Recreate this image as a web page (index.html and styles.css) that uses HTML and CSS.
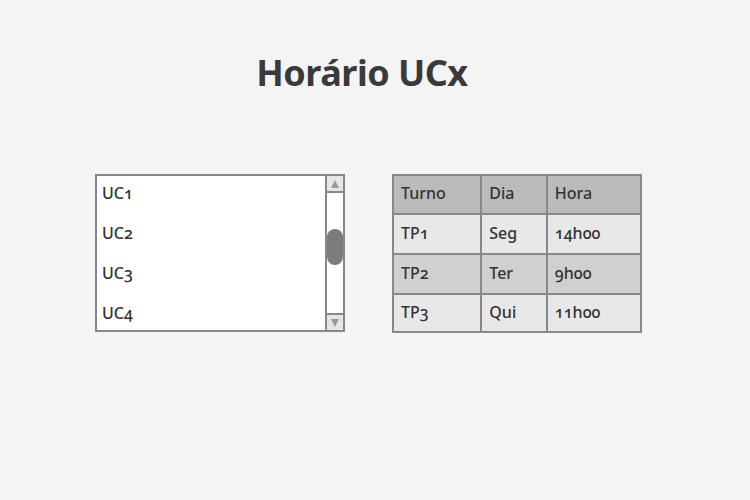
FILE: index.html
```html
<!DOCTYPE html>
<html lang="pt">
<head>
<meta charset="utf-8">
<title>Horário UCx</title>
<link rel="stylesheet" href="styles.css">
</head>
<body>
<div class="page">
  <h1 class="title">Horário UCx</h1>
  <div class="content">
    <div class="listbox">
      <ul class="items">
        <li>UC1</li>
        <li>UC2</li>
        <li>UC3</li>
        <li>UC4</li>
      </ul>
      <div class="scrollbar">
        <div class="btn up"><span class="tri-up"></span></div>
        <div class="track"><div class="thumb"></div></div>
        <div class="btn down"><span class="tri-down"></span></div>
      </div>
    </div>
    <table class="grid">
      <thead>
        <tr><th class="c1">Turno</th><th class="c2">Dia</th><th class="c3">Hora</th></tr>
      </thead>
      <tbody>
        <tr class="light"><td>TP1</td><td>Seg</td><td>14h00</td></tr>
        <tr class="dark"><td>TP2</td><td>Ter</td><td>9h00</td></tr>
        <tr class="light last"><td>TP3</td><td>Qui</td><td>11h00</td></tr>
      </tbody>
    </table>
  </div>
</div>
</body>
</html>
```
FILE: styles.css
```css
* { box-sizing: border-box; }
html, body { margin: 0; padding: 0; }
body {
  width: 750px;
  height: 500px;
  background: #f4f4f4;
  color: #333;
  font-family: "Noto Sans", "Open Sans", sans-serif;
  font-variant-numeric: oldstyle-nums;
  overflow: hidden;
}
.page {
  display: flex;
  flex-direction: column;
  align-items: center;
  padding-top: 48px;
}
.title {
  margin: 0;
  font-size: 36px;
  font-weight: 700;
  line-height: 50px;
  letter-spacing: -0.5px;
  color: #3a3a3a;
  padding-right: 26px;
}
.content {
  display: flex;
  gap: 47px;
  margin-top: 76px;
  padding-right: 13px;
}
.listbox {
  width: 250px;
  height: 158px;
  border: 2px solid #888;
  background: #fff;
  display: flex;
}
.items {
  list-style: none;
  margin: 0;
  padding: 7px 0 0 5px;
  flex: 1;
  font-size: 16px;
  font-weight: 500;
  line-height: 20px;
}
.items li { margin-bottom: 20px; }
.scrollbar {
  width: 18px;
  border-left: 2px solid #888;
  display: flex;
  flex-direction: column;
}
.btn {
  height: 17px;
  background: #e6e6e6;
  display: flex;
  align-items: center;
  justify-content: center;
}
.btn.up { border-bottom: 2px solid #888; }
.btn.down { border-top: 2px solid #888; }
.tri-up {
  width: 0; height: 0;
  border-left: 4px solid transparent;
  border-right: 4px solid transparent;
  border-bottom: 8px solid #9a9a9a;
}
.tri-down {
  width: 0; height: 0;
  border-left: 4px solid transparent;
  border-right: 4px solid transparent;
  border-top: 8px solid #9a9a9a;
}
.track {
  flex: 1;
  background: #fff;
  padding-top: 36px;
}
.thumb {
  height: 36px;
  background: #7b7b7b;
  border-radius: 8px;
}
.grid {
  border-collapse: collapse;
  border: 2px solid #888;
  font-size: 16px;
  width: 250px;
}
.grid th, .grid td {
  border: 2px solid #888;
  height: 39px;
  padding: 0 0 3px 7px;
  text-align: left;
  font-weight: 500;
}
.grid td { height: 40px; }
.grid .last td { height: 38px; }
.grid th { background: #bababa; }
.c1 { width: 89px; }
.c2 { width: 66px; }
.c3 { width: 95px; }
.light td { background: #e8e8e8; }
.dark td { background: #d0d0d0; }
```
